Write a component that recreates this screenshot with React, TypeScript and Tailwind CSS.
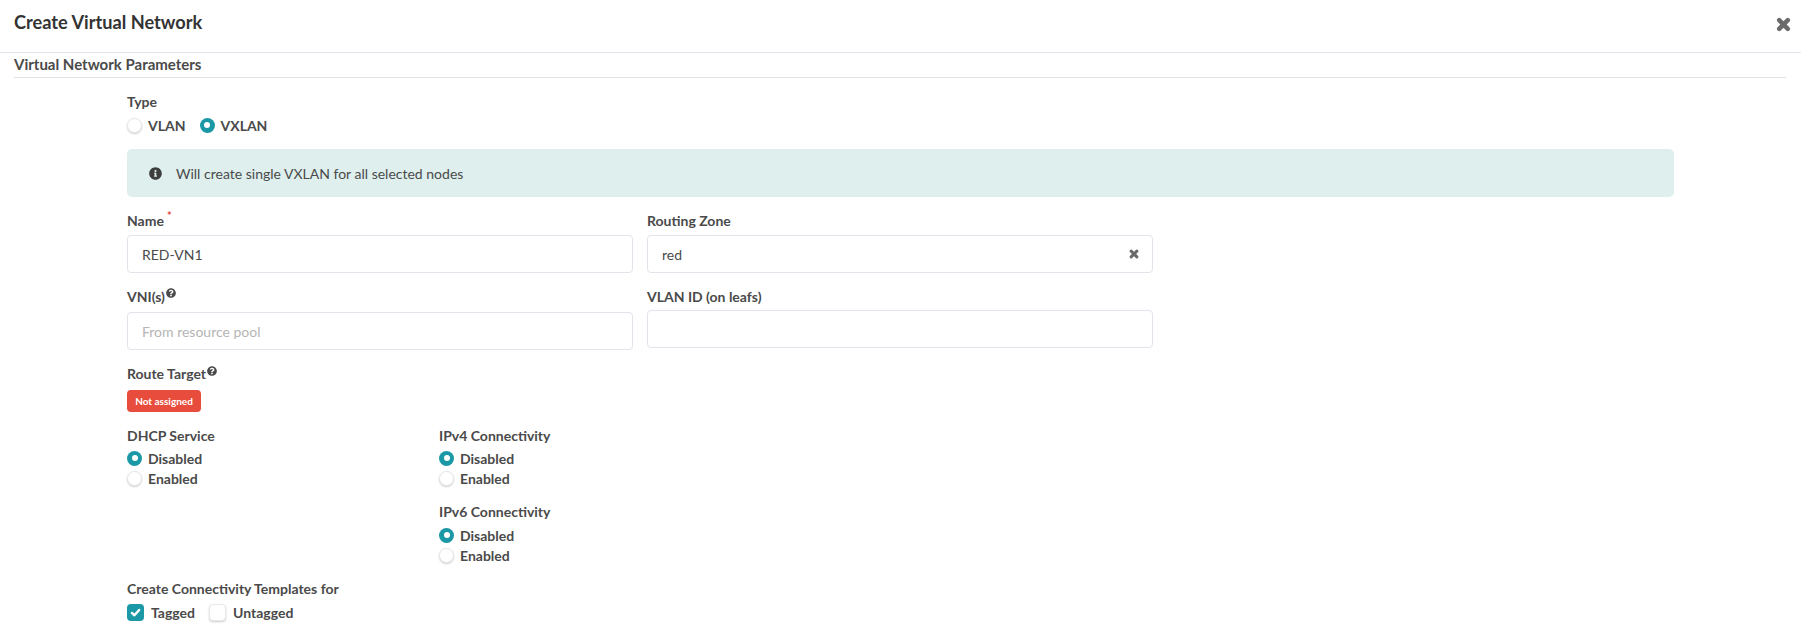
import React from "react";
import { FaInfoCircle, FaQuestionCircle } from "react-icons/fa";

function CloseIcon({ className }: { className?: string }) {
  return (
    <svg viewBox="0 0 14 14" className={className} fill="none" stroke="currentColor" strokeWidth="4.2" strokeLinecap="round">
      <path d="M3 3L11 11M11 3L3 11" />
    </svg>
  );
}

function Radio({ label, checked }: { label: string; checked?: boolean }) {
  return (
    <label className="flex items-center h-5 gap-[6px] text-[14px] font-bold text-[#4a4a4a]">
      {checked ? (
        <span className="w-[15px] h-[15px] rounded-full bg-[#1b98a6] flex items-center justify-center">
          <span className="w-[6px] h-[6px] rounded-full bg-white" />
        </span>
      ) : (
        <span className="w-[15px] h-[15px] rounded-full bg-white border border-[#e8e8e8] shadow-[0_1px_2px_rgba(0,0,0,0.2)]" />
      )}
      {label}
    </label>
  );
}

function Check({ label, checked }: { label: string; checked?: boolean }) {
  return (
    <label className="flex items-center h-5 gap-[7px] text-[14px] font-bold text-[#4a4a4a]">
      {checked ? (
        <span className="w-[17px] h-[17px] rounded-[4px] bg-[#1b98a6] flex items-center justify-center">
          <svg viewBox="0 0 12 12" className="w-[11px] h-[11px]" fill="none" stroke="white" strokeWidth="2.6" strokeLinecap="round" strokeLinejoin="round">
            <path d="M2 6.5L4.8 9L10 3.2" />
          </svg>
        </span>
      ) : (
        <span className="w-[17px] h-[17px] rounded-[4px] bg-white border border-[#e8e8e8] shadow-[0_1px_2px_rgba(0,0,0,0.2)]" />
      )}
      {label}
    </label>
  );
}

function FieldLabel({ children }: { children: React.ReactNode }) {
  return <div className="text-[14px] leading-5 font-bold text-[#4a4a4a] flex items-start">{children}</div>;
}

function Input({ value, placeholder, clear }: { value?: string; placeholder?: string; clear?: boolean }) {
  return (
    <div className="h-[38px] w-full flex items-center justify-between pl-[14px] pr-[13px] bg-white border border-[#e3e3ec] rounded-[4px] text-[14px]">
      {value ? <span className="text-[#4a4a4a]">{value}</span> : <span className="text-[#b5b5b5]">{placeholder}</span>}
      {clear && <CloseIcon className="w-[10px] h-[10px] text-[#6b6b6b]" />}
    </div>
  );
}

export default function App() {
  return (
    <div className="w-[1801px] h-[641px] overflow-hidden bg-white font-['Lato',sans-serif] text-[#4a4a4a]">
      {/* header */}
      <div className="h-[53px] border-b border-[#e3e3ec] flex items-start justify-between pl-[14px] pr-[10px] pt-[9px]">
        <h1 className="text-[18.2px] leading-[26px] font-bold text-[#333]">Create Virtual Network</h1>
        <CloseIcon className="w-[15px] h-[15px] mt-[8px] text-[#6b6b6b]" />
      </div>

      {/* section title */}
      <div className="ml-[14px] mr-[15px] h-[25px] border-b border-[#e3e3e6] text-[15px] leading-[23px] font-bold text-[#4a4a4a]">
        Virtual Network Parameters
      </div>

      {/* form */}
      <div className="ml-[127px] w-[1547px] pt-[14px]">
        <FieldLabel>Type</FieldLabel>
        <div className="flex gap-[14px] mt-[3px]">
          <Radio label="VLAN" />
          <Radio label="VXLAN" checked />
        </div>

        <div className="mt-[14px] h-[48px] bg-[#deefee] rounded-[5px] flex items-center pl-[22px] gap-[14px] text-[14px] text-[#4a4a4a]">
          <FaInfoCircle className="w-[13px] h-[13px] text-[#3d3d3d]" />
          Will create single VXLAN for all selected nodes
        </div>

        <div className="grid grid-cols-[506px_506px] gap-x-[14px] mt-[14px]">
          <div>
            <FieldLabel>
              Name<span className="text-[#e74c3c] text-[11px] leading-[10px] ml-[3px]">*</span>
            </FieldLabel>
            <div className="mt-[4px]">
              <Input value="RED-VN1" />
            </div>
          </div>
          <div>
            <FieldLabel>Routing Zone</FieldLabel>
            <div className="mt-[4px]">
              <Input value="red" clear />
            </div>
          </div>
          <div className="mt-[14px]">
            <FieldLabel>
              VNI(s)
              <FaQuestionCircle className="w-[10px] h-[10px] ml-[1px] mt-[1px] text-[#4a4a4a]" />
            </FieldLabel>
            <div className="mt-[5px]">
              <Input placeholder="From resource pool" />
            </div>
          </div>
          <div className="mt-[14px]">
            <FieldLabel>VLAN ID (on leafs)</FieldLabel>
            <div className="mt-[3px]">
              <Input />
            </div>
          </div>
        </div>

        <div className="mt-[14px]">
          <FieldLabel>
            Route Target
            <FaQuestionCircle className="w-[10px] h-[10px] ml-[1px] mt-[2px] text-[#4a4a4a]" />
          </FieldLabel>
          <div className="mt-[6px] flex items-center justify-center w-[74px] h-[22px] rounded-[4px] bg-[#e74c3c] text-white text-[10px] font-bold">
            Not assigned
          </div>
        </div>

        <div className="flex mt-[14px]">
          <div className="w-[312px]">
            <FieldLabel>DHCP Service</FieldLabel>
            <div className="mt-[2px]">
              <Radio label="Disabled" checked />
              <Radio label="Enabled" />
            </div>
          </div>
          <div>
            <FieldLabel>IPv4 Connectivity</FieldLabel>
            <div className="mt-[2px]">
              <Radio label="Disabled" checked />
              <Radio label="Enabled" />
            </div>
            <div className="mt-[14px]">
              <FieldLabel>IPv6 Connectivity</FieldLabel>
            </div>
            <div className="mt-[3px]">
              <Radio label="Disabled" checked />
              <Radio label="Enabled" />
            </div>
          </div>
        </div>

        <div className="mt-[14px]">
          <FieldLabel>Create Connectivity Templates for</FieldLabel>
          <div className="flex gap-[14px] mt-[3px]">
            <Check label="Tagged" checked />
            <Check label="Untagged" />
          </div>
        </div>
      </div>
    </div>
  );
}
